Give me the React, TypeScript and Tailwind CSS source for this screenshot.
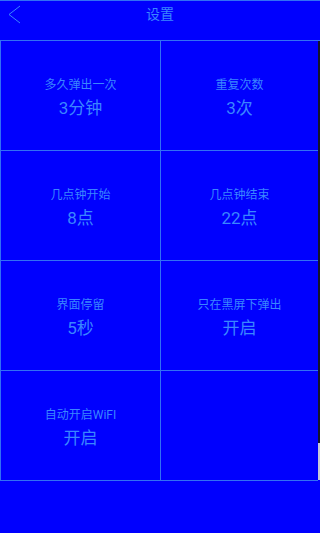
import React from "react";

const cells = [
  { label: "多久弹出一次", value: "3分钟" },
  { label: "重复次数", value: "3次" },
  { label: "几点钟开始", value: "8点" },
  { label: "几点钟结束", value: "22点" },
  { label: "界面停留", value: "5秒" },
  { label: "只在黑屏下弹出", value: "开启" },
  { label: "自动开启WiFI", value: "开启" },
  { label: "", value: "" },
];

export default function App() {
  return (
    <div
      className="w-[320px] h-[533px] bg-[#0000fe] overflow-hidden text-[#3a86ff]"
      style={{ fontFamily: 'Roboto, "Noto Sans CJK SC", sans-serif' }}
    >
      <div className="relative h-[41px] border-t border-b border-[#3270f4]">
        <svg className="absolute left-[6px] top-[4px]" width="16" height="20" viewBox="0 0 16 20">
          <path d="M14 1 L3 9.5 L14 18" fill="none" stroke="#3a86ff" strokeWidth="1" />
        </svg>
        <div className="text-center text-[14px] leading-[20px] pt-[3px]">设置</div>
      </div>
      <div className="flex">
        <div className="grid grid-cols-[160px_1fr] w-[318px] border-l border-[#3270f4]">
          {cells.map((c, i) => (
            <div
              key={i}
              className={
                "h-[110px] pt-[5px] border-b border-[#3270f4] flex flex-col items-center justify-center " +
                (i % 2 === 0 ? "border-r" : "")
              }
            >
              <div className="text-[12px] leading-[16px]">{c.label}</div>
              <div className="text-[17px] leading-[22px] mt-[4px]">{c.value}</div>
            </div>
          ))}
        </div>
        <div className="w-[2px] flex flex-col">
          <div className="h-[402px] bg-[#14142a]" />
          <div className="h-[37px] bg-[#c8c8d8]" />
        </div>
      </div>
    </div>
  );
}
